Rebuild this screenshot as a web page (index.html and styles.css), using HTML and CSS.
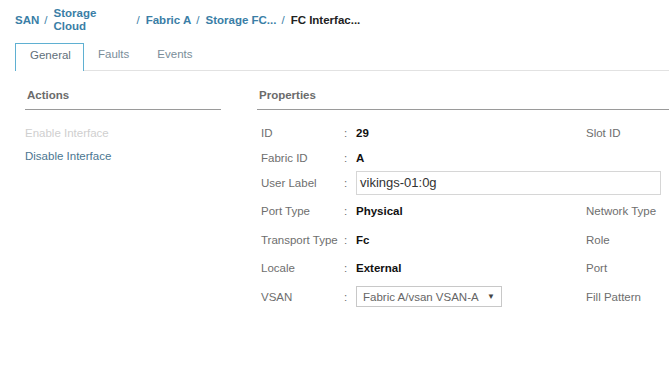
FILE: index.html
```html
<!DOCTYPE html>
<html lang="en">
<head>
    <meta charset="UTF-8">
    <meta name="viewport" content="width=device-width, initial-scale=1.0">
    <title>FC Interface</title>
    <link rel="stylesheet" href="styles.css">
</head>
<body>
    <div class="crumbs">
        <a class="crumb">SAN</a>
        <span class="sep">/</span>
        <a class="crumb crumb-wrap">Storage Cloud</a>
        <span class="sep">/</span>
        <a class="crumb">Fabric A</a>
        <span class="sep">/</span>
        <a class="crumb">Storage FC...</a>
        <span class="sep">/</span>
        <span class="crumb current">FC Interfac...</span>
    </div>

    <div class="tabs">
        <div class="tab active">General</div>
        <div class="tab">Faults</div>
        <div class="tab">Events</div>
        <div class="tab-rest"></div>
    </div>

    <div class="content">
        <div class="actions">
            <div class="section-title">Actions</div>
            <div class="action disabled">Enable Interface</div>
            <div class="action">Disable Interface</div>
        </div>

        <div class="properties">
            <div class="section-title">Properties</div>
            <div class="props-grid">
                <div class="row">
                    <span class="label">ID</span><span class="colon">:</span><span class="value">29</span>
                    <span class="right-label">Slot ID</span>
                </div>
                <div class="row">
                    <span class="label">Fabric ID</span><span class="colon">:</span><span class="value">A</span>
                </div>
                <div class="row row-input">
                    <span class="label">User Label</span><span class="colon">:</span>
                    <div class="text-input">vikings-01:0g</div>
                </div>
                <div class="row">
                    <span class="label">Port Type</span><span class="colon">:</span><span class="value">Physical</span>
                    <span class="right-label">Network Type</span>
                </div>
                <div class="row">
                    <span class="label">Transport Type</span><span class="colon">:</span><span class="value">Fc</span>
                    <span class="right-label">Role</span>
                </div>
                <div class="row">
                    <span class="label">Locale</span><span class="colon">:</span><span class="value">External</span>
                    <span class="right-label">Port</span>
                </div>
                <div class="row">
                    <span class="label">VSAN</span><span class="colon">:</span>
                    <div class="select">Fabric A/vsan VSAN-A<span class="caret">&#9660;</span></div>
                    <span class="right-label">Fill Pattern</span>
                </div>
            </div>
        </div>
    </div>
</body>
</html>
```

FILE: styles.css
```css
/* FC interface properties panel */
body {
    margin: 0;
    background-color: #fff;
    font-family: "Liberation Sans", Arial, sans-serif;
    font-size: 11.5px;
    color: #6e6e6e;
    overflow: hidden;
}

.crumbs {
    display: flex;
    align-items: center;
    height: 40px;
    padding-left: 15px;
    font-size: 11.5px;
    font-weight: bold;
}

.crumb {
    color: #3a7ea6;
}

.crumb-wrap {
    width: 76px;
    line-height: 13px;
    margin-bottom: 1px;
}

.current {
    color: #222;
}

.sep {
    color: #3a7ea6;
    font-weight: normal;
    margin: 0 6px 0 5px;
}

.crumb-wrap + .sep {
    margin-left: 7px;
}

.tabs {
    display: flex;
    margin-top: 3px;
    height: 28px;
    padding-left: 15px;
}

.tab {
    padding: 0 14px;
    line-height: 22px;
    font-size: 11.5px;
    color: #7a8d99;
    border-bottom: 1px solid #e2e2e2;
}

.tab.active {
    width: 39px;
    color: #5f6f7a;
    border: 1px solid #5fb0d2;
    border-bottom: none;
    text-align: center;
}

.tab-rest {
    flex: 1;
    border-bottom: 1px solid #e2e2e2;
}

.content {
    display: flex;
    padding-top: 18px;
}

.actions {
    width: 196px;
    margin-left: 25px;
}

.properties {
    flex: 1;
    margin-left: 36px;
}

.section-title {
    height: 20px;
    padding-left: 2px;
    font-weight: bold;
    color: #6b6b6b;
    border-bottom: 1px solid #9a9a9a;
}

.action {
    margin-top: 12px;
    height: 11px;
    line-height: 11px;
    color: #4b7691;
}

.actions .section-title + .action {
    margin-top: 18px;
}

.action.disabled {
    color: #cfcfcf;
}

.props-grid {
    padding-left: 4px;
    padding-top: 10px;
}

.row {
    display: flex;
    align-items: center;
    height: 25px;
}

.row-input {
    margin-bottom: 2px;
}

.row:nth-child(n+4) {
    height: 28.5px;
}

.label {
    width: 83px;
}

.colon {
    width: 12px;
}

.value {
    width: 230px;
    color: #111;
    font-weight: bold;
}

.text-input {
    flex: 1;
    height: 22px;
    line-height: 22px;
    padding-left: 3px;
    margin-right: 8px;
    border: 1px solid #d6d6d6;
    color: #333;
    font-size: 13px;
}

.select {
    display: flex;
    justify-content: space-between;
    align-items: center;
    width: 132px;
    height: 19px;
    padding: 0 6px;
    margin-right: 84px;
    border: 1px solid #c8c8c8;
    color: #666;
    font-size: 11.5px;
}

.caret {
    font-size: 8px;
    color: #444;
}
```
